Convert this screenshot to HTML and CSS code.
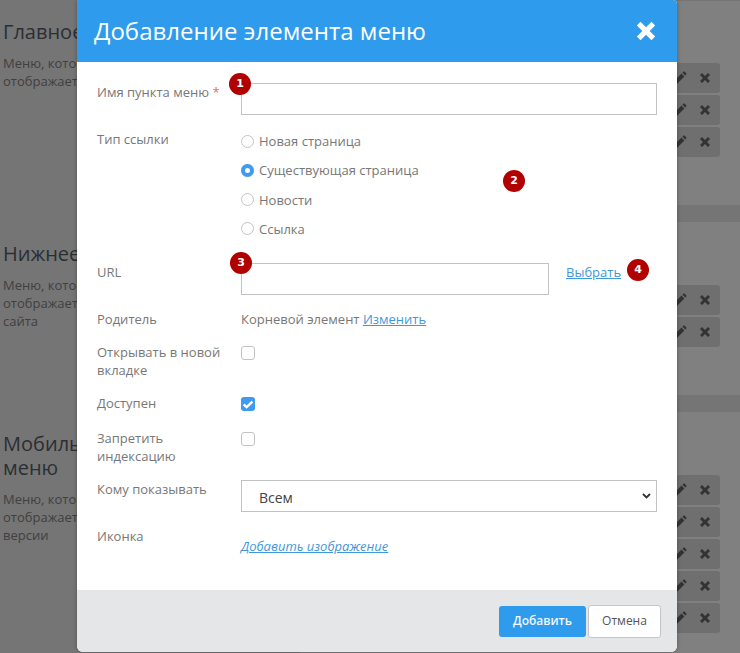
FILE: index.html
```html
<!DOCTYPE html>
<html lang="ru">
<head>
<meta charset="utf-8">
<title>Добавление элемента меню</title>
<link rel="stylesheet" href="styles.css">
</head>
<body>
<svg class="sprites" width="0" height="0" aria-hidden="true">
  <symbol id="pen" viewBox="0 0 14 14"><path d="M0.6 13.4l0.9-3.8 7-7 2.9 2.9-7 7zM9.4 1.7l0.9-0.9c0.4-0.4 1-0.4 1.4 0l1.5 1.5c0.4 0.4 0.4 1 0 1.4l-0.9 0.9z"/></symbol>
  <symbol id="cross" viewBox="0 0 12 12"><path d="M1 3l2-2 3 3 3-3 2 2-3 3 3 3-2 2-3-3-3 3-2-2 3-3z"/></symbol>
</svg>

<main class="page">
  <section class="section">
    <div class="info">
      <h2>Главное меню</h2>
      <p>Меню, которое<br>отображается в шапке</p>
    </div>
    <div class="panel">
      <div class="item"><svg class="ico-pen"><use href="#pen"/></svg><svg class="ico-x"><use href="#cross"/></svg></div>
      <div class="item"><svg class="ico-pen"><use href="#pen"/></svg><svg class="ico-x"><use href="#cross"/></svg></div>
      <div class="item"><svg class="ico-pen"><use href="#pen"/></svg><svg class="ico-x"><use href="#cross"/></svg></div>
    </div>
  </section>
  <section class="section">
    <div class="info">
      <h2>Нижнее меню</h2>
      <p>Меню, которое<br>отображается в подвале<br>сайта</p>
    </div>
    <div class="panel">
      <div class="item"><svg class="ico-pen"><use href="#pen"/></svg><svg class="ico-x"><use href="#cross"/></svg></div>
      <div class="item"><svg class="ico-pen"><use href="#pen"/></svg><svg class="ico-x"><use href="#cross"/></svg></div>
    </div>
  </section>
  <section class="section">
    <div class="info">
      <h2>Мобильное<br>меню</h2>
      <p>Меню, которое<br>отображается в мобильной<br>версии</p>
    </div>
    <div class="panel">
      <div class="item"><svg class="ico-pen"><use href="#pen"/></svg><svg class="ico-x"><use href="#cross"/></svg></div>
      <div class="item"><svg class="ico-pen"><use href="#pen"/></svg><svg class="ico-x"><use href="#cross"/></svg></div>
      <div class="item"><svg class="ico-pen"><use href="#pen"/></svg><svg class="ico-x"><use href="#cross"/></svg></div>
      <div class="item"><svg class="ico-pen"><use href="#pen"/></svg><svg class="ico-x"><use href="#cross"/></svg></div>
      <div class="item"><svg class="ico-pen"><use href="#pen"/></svg><svg class="ico-x"><use href="#cross"/></svg></div>
    </div>
  </section>
</main>

<div class="modal">
  <header class="modal-head">
    <h1>Добавление элемента меню</h1>
    <svg class="modal-close"><use href="#cross"/></svg>
  </header>
  <form class="modal-body">
    <div class="row">
      <label class="lbl">Имя пункта меню <span class="req">*</span></label>
      <input class="text" type="text">
    </div>
    <div class="row row-radios">
      <div class="lbl">Тип ссылки</div>
      <div class="radios">
        <label class="radio"><input type="radio" name="t">Новая страница</label>
        <label class="radio"><input type="radio" name="t" checked>Существующая страница</label>
        <label class="radio"><input type="radio" name="t">Новости</label>
        <label class="radio"><input type="radio" name="t">Ссылка</label>
      </div>
    </div>
    <div class="row">
      <label class="lbl">URL</label>
      <div class="url-line">
        <input class="text url" type="text">
        <a class="link pick" href="#">Выбрать</a>
      </div>
    </div>
    <div class="row">
      <div class="lbl">Родитель</div>
      <div class="val">Корневой элемент <a class="link" href="#">Изменить</a></div>
    </div>
    <div class="row">
      <label class="lbl">Открывать в новой вкладке</label>
      <input class="check" type="checkbox">
    </div>
    <div class="row row-wide">
      <label class="lbl">Доступен</label>
      <input class="check" type="checkbox" checked>
    </div>
    <div class="row">
      <label class="lbl">Запретить индексацию</label>
      <input class="check" type="checkbox">
    </div>
    <div class="row">
      <label class="lbl">Кому показывать</label>
      <select class="select"><option>Всем</option></select>
    </div>
    <div class="row row-last">
      <div class="lbl">Иконка</div>
      <a class="link add-image" href="#">Добавить изображение</a>
    </div>
  </form>
  <footer class="modal-foot">
    <button class="btn btn-primary" type="button">Добавить</button>
    <button class="btn btn-plain" type="button">Отмена</button>
  </footer>
  <span class="badge b1">1</span>
  <span class="badge b2">2</span>
  <span class="badge b3">3</span>
  <span class="badge b4">4</span>
</div>
</body>
</html>
```
FILE: styles.css
```css
* { box-sizing: border-box; }
html, body { margin: 0; height: 653px; overflow: hidden; }
body {
  background: #757575;
  font-family: "Open Sans", sans-serif;
  font-size: 13px;
  line-height: 18px;
  position: relative;
}
.sprites { position: absolute; }

.page { display: flex; flex-direction: column; gap: 17px; }
.section { display: flex; }
.info { width: 300px; padding: 20px 0 0 3px; color: #2b2f33; }
.info h2 { margin: 0; font-size: 20px; line-height: 24px; font-weight: 400; }
.info p { margin: 10px 0 0; color: #404040; }
.panel {
  flex: 1;
  background: #808080;
  padding: 63px 20px 48px 0;
  display: flex;
  flex-direction: column;
  align-items: flex-end;
  gap: 2px;
}
.section:first-child .panel { border-top: 1px solid #757575; padding-top: 62px; }
.item {
  width: 100px;
  height: 30px;
  background: #6f6f70;
  border-radius: 3px;
  display: flex;
  align-items: center;
  justify-content: flex-end;
  padding-right: 9px;
  gap: 12px;
}
.ico-pen { width: 14px; height: 14px; fill: #333; }
.ico-x { width: 12px; height: 12px; fill: #333; }

.modal {
  position: absolute;
  left: 77px;
  top: 0;
  width: 600px;
  height: 652px;
  background: #fff;
  border-radius: 0 4px 6px 6px;
  box-shadow: 0 0 4px rgba(0, 0, 0, .3);
  overflow: hidden;
}
.modal-head {
  height: 62px;
  background: #2e9bec;
  color: #fff;
  display: flex;
  align-items: center;
  justify-content: space-between;
  padding: 0 20px 0 17px;
}
.modal-head h1 { margin: 0; font-size: 24px; line-height: 30px; font-weight: 400; }
.modal-close { width: 22px; height: 22px; fill: #fff; }

.modal-body { height: 528px; padding: 21px 20px 0; color: #777; }
.row { display: grid; grid-template-columns: 144px 1fr; margin-bottom: 15px; align-items: start; }
.row-radios { margin-bottom: 25px; }
.row-wide { margin-bottom: 17px; }
.row-last { margin-bottom: 0; }
.lbl { display: block; max-width: 130px; }
.req { color: #e2706c; }
.text, .select {
  display: block;
  width: 100%;
  height: 32px;
  border: 1px solid #c3c3c3;
  background-color: #fff;
  border-radius: 0;
  outline: 0;
}
.select {
  appearance: none;
  font: inherit;
  font-size: 14px;
  color: #444;
  padding: 4px 0 0 17px;
  background-image: url("data:image/svg+xml,%3Csvg xmlns='http://www.w3.org/2000/svg' viewBox='0 0 9 6'%3E%3Cpath d='M1 1l3.5 3.5L8 1' fill='none' stroke='%23333' stroke-width='1.8'/%3E%3C/svg%3E");
  background-repeat: no-repeat;
  background-position: right 5px center;
  background-size: 9px 6px;
}
.radios { display: flex; flex-direction: column; gap: 11.3px; padding-top: 2px; }
.radio { display: flex; align-items: center; gap: 5px; height: 18px; }
.radio input {
  appearance: none;
  margin: 0;
  width: 13px;
  height: 13px;
  border: 1px solid #c4c4c4;
  border-radius: 50%;
  background: #fff;
}
.radio input:checked { background: #3f9bf0; border: 0; box-shadow: inset 0 0 0 4px #3f9bf0, inset 0 0 0 13px #fff; }
.url-line { display: flex; align-items: flex-start; gap: 17px; }
.url { width: 308px; }
.link { color: #3f99d8; text-decoration: underline; }
.check {
  appearance: none;
  margin: 3px 0 0;
  width: 14px;
  height: 14px;
  border: 1px solid #c4c4c4;
  border-radius: 3px;
  background: #fff;
}
.check:checked {
  border: 0;
  background: #3f9bf0 url("data:image/svg+xml,%3Csvg xmlns='http://www.w3.org/2000/svg' viewBox='0 0 14 14'%3E%3Cpath d='M2.6 7.4l3 2.8 5.8-5.6' fill='none' stroke='%23fff' stroke-width='2.4'/%3E%3C/svg%3E") center/14px no-repeat;
}
.add-image { font-style: italic; padding-top: 10px; justify-self: start; }

.modal-foot {
  height: 62px;
  background: #e4e6e8;
  display: flex;
  justify-content: flex-end;
  align-items: center;
  gap: 2px;
  padding: 0 16px 0 0;
}
.btn {
  font: inherit;
  font-size: 12px;
  border-radius: 3px;
  height: 31px;
}
.btn-primary { width: 87px; background: #2e9bec; border: 0; color: #f2f8fd; font-weight: 600; }
.btn-plain { width: 73px; height: 33px; background: #fff; border: 1px solid #c3c5c7; color: #555; }

.badge {
  position: absolute;
  width: 22px;
  height: 22px;
  border-radius: 50%;
  background: #b00000;
  color: #fff;
  font-family: "DejaVu Sans", sans-serif;
  font-size: 11px;
  font-weight: 700;
  line-height: 22px;
  text-align: center;
}
.b1 { left: 152px; top: 73px; }
.b2 { left: 426px; top: 170px; }
.b3 { left: 153px; top: 252px; }
.b4 { left: 550px; top: 259px; }
```
